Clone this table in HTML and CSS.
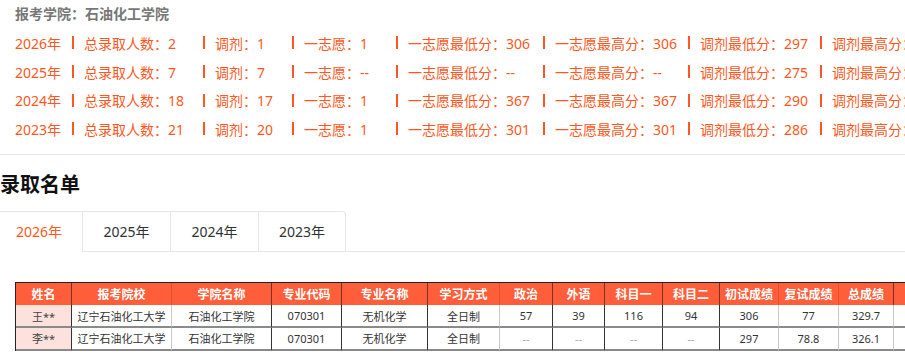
FILE: index.html
```html
<!DOCTYPE html>
<html lang="zh-CN">
<head>
<meta charset="utf-8">
<title>录取信息</title>
<link rel="stylesheet" href="styles.css">
</head>
<body>
<div class="page">
  <section class="summary">
    <div class="school">报考学院：石油化工学院</div>
    <div class="stat-row">
      <span class="s w-year">2026年</span><i class="sep"></i>
      <span class="s w-total">总录取人数：2</span><i class="sep"></i>
      <span class="s w-adj">调剂：1</span><i class="sep"></i>
      <span class="s w-first">一志愿：1</span><i class="sep"></i>
      <span class="s w-fmin">一志愿最低分：306</span><i class="sep"></i>
      <span class="s w-fmax">一志愿最高分：306</span><i class="sep"></i>
      <span class="s w-amin">调剂最低分：297</span><i class="sep"></i>
      <span class="s">调剂最高分：</span>
    </div>
    <div class="stat-row">
      <span class="s w-year">2025年</span><i class="sep"></i>
      <span class="s w-total">总录取人数：7</span><i class="sep"></i>
      <span class="s w-adj">调剂：7</span><i class="sep"></i>
      <span class="s w-first">一志愿：--</span><i class="sep"></i>
      <span class="s w-fmin">一志愿最低分：--</span><i class="sep"></i>
      <span class="s w-fmax">一志愿最高分：--</span><i class="sep"></i>
      <span class="s w-amin">调剂最低分：275</span><i class="sep"></i>
      <span class="s">调剂最高分：</span>
    </div>
    <div class="stat-row">
      <span class="s w-year">2024年</span><i class="sep"></i>
      <span class="s w-total">总录取人数：18</span><i class="sep"></i>
      <span class="s w-adj">调剂：17</span><i class="sep"></i>
      <span class="s w-first">一志愿：1</span><i class="sep"></i>
      <span class="s w-fmin">一志愿最低分：367</span><i class="sep"></i>
      <span class="s w-fmax">一志愿最高分：367</span><i class="sep"></i>
      <span class="s w-amin">调剂最低分：290</span><i class="sep"></i>
      <span class="s">调剂最高分：</span>
    </div>
    <div class="stat-row">
      <span class="s w-year">2023年</span><i class="sep"></i>
      <span class="s w-total">总录取人数：21</span><i class="sep"></i>
      <span class="s w-adj">调剂：20</span><i class="sep"></i>
      <span class="s w-first">一志愿：1</span><i class="sep"></i>
      <span class="s w-fmin">一志愿最低分：301</span><i class="sep"></i>
      <span class="s w-fmax">一志愿最高分：301</span><i class="sep"></i>
      <span class="s w-amin">调剂最低分：286</span><i class="sep"></i>
      <span class="s">调剂最高分：</span>
    </div>
  </section>

  <div class="divider"></div>

  <h2 class="title">录取名单</h2>

  <div class="tabs">
    <div class="tabs-nav">
      <div class="tab active">2026年</div>
      <div class="tab">2025年</div>
      <div class="tab">2024年</div>
      <div class="tab">2023年</div>
    </div>
  </div>

  <div class="grid">
    <div class="c h d">姓名</div>
    <div class="c h l">报考院校</div>
    <div class="c h d">学院名称</div>
    <div class="c h d">专业代码</div>
    <div class="c h d">专业名称</div>
    <div class="c h l">学习方式</div>
    <div class="c h d">政治</div>
    <div class="c h d">外语</div>
    <div class="c h d">科目一</div>
    <div class="c h d">科目二</div>
    <div class="c h l">初试成绩</div>
    <div class="c h l">复试成绩</div>
    <div class="c h d">总成绩</div>
    <div class="c h l"></div>

    <div class="c b r1 d name">王**</div>
    <div class="c b r1 l">辽宁石油化工大学</div>
    <div class="c b r1 d">石油化工学院</div>
    <div class="c b r1 d">070301</div>
    <div class="c b r1 d">无机化学</div>
    <div class="c b r1 l">全日制</div>
    <div class="c b r1 d">57</div>
    <div class="c b r1 d">39</div>
    <div class="c b r1 d">116</div>
    <div class="c b r1 d">94</div>
    <div class="c b r1 l">306</div>
    <div class="c b r1 l">77</div>
    <div class="c b r1 l">329.7</div>
    <div class="c b r1 l"></div>

    <div class="c b r2 d name">李**</div>
    <div class="c b r2 l">辽宁石油化工大学</div>
    <div class="c b r2 d">石油化工学院</div>
    <div class="c b r2 d">070301</div>
    <div class="c b r2 d">无机化学</div>
    <div class="c b r2 l">全日制</div>
    <div class="c b r2 d muted">--</div>
    <div class="c b r2 d muted">--</div>
    <div class="c b r2 d muted">--</div>
    <div class="c b r2 d muted">--</div>
    <div class="c b r2 l">297</div>
    <div class="c b r2 l">78.8</div>
    <div class="c b r2 l">326.1</div>
    <div class="c b r2 l"></div>
  </div>
</div>
</body>
</html>
```

FILE: styles.css
```css
* { box-sizing: border-box; }
html, body { margin: 0; padding: 0; background: #fff; }
body {
  font-family: "Noto Sans", "Noto Sans CJK SC", sans-serif;
  font-size: 14px;
  color: #333;
}
.page {
  width: 905px;
  height: 364px;
  overflow: hidden;
  white-space: nowrap;
}

.summary { padding-left: 15px; }
.school {
  height: 28.67px;
  line-height: 28.67px;
  font-weight: bold;
  color: #777;
}
.stat-row {
  display: flex;
  align-items: center;
  height: 28.67px;
  color: #ff5722;
}
.s { flex: none; }
.w-year { width: 57px; }
.w-total { width: 119px; }
.w-adj { width: 77px; }
.w-first { width: 92px; }
.w-fmin { width: 135px; }
.w-fmax { width: 133px; }
.w-amin { width: 120px; }
.sep {
  flex: none;
  display: block;
  width: 1.5px;
  height: 13px;
  margin-right: 10.5px;
  background: #ff5722;
}

.divider {
  margin-top: 10.67px;
  height: 1px;
  background: #e4e4e4;
}

.title {
  margin: 15px 0 11px 0;
  height: 30px;
  line-height: 30px;
  font-size: 20px;
  font-weight: bold;
  color: #111;
}

.tabs {
  display: flex;
  border-bottom: 1px solid #e4e7ed;
  margin-left: -5px;
}
.tabs-nav {
  display: flex;
  border: 1px solid #e4e7ed;
  border-bottom: none;
  border-radius: 4px 4px 0 0;
  margin-bottom: -1px;
}
.tab {
  height: 40px;
  line-height: 39px;
  padding: 0 20px;
  border-left: 1px solid #e4e7ed;
  border-bottom: 1px solid transparent;
  color: #303133;
  text-align: center;
}
.tab:first-child { border-left: none; width: 86px; }
.tab:nth-child(2) { width: 88px; }
.tab:nth-child(3) { width: 88px; }
.tab:nth-child(4) { width: 87px; }
.tab.active {
  color: #ff5722;
  border-bottom-color: #fff;
}

.grid {
  margin: 30px 0 0 15px;
  display: grid;
  grid-template-columns: 56px 100px 100px 70px 86px 72px 53px 52px 58px 57px 59px 60px 55px 60px;
  border-top: 1px solid #222;
  border-left: 1px solid #222;
  width: max-content;
  font-size: 11px;
}
.c {
  display: flex;
  align-items: center;
  justify-content: center;
  border-right: 1px solid #333;
}
.h {
  height: 22px;
  background: #ff5e3a;
  color: #fff;
  font-weight: bold;
  font-size: 12px;
}
.h.d { border-right-color: #7a3322; }
.h.l { border-right-color: #e2502f; }
.b {
  height: 23px;
  color: #333;
  background: #fff;
}
.b.d { border-right-color: #333; }
.b.l { border-right-color: #c8c8c8; }
.r1 { border-bottom: 2px solid #8a8a8a; padding-top: 1px; }
.r2 { border-bottom: 2px solid #8a8a8a; }
.name { background: #fde1dc; color: #444; }
.muted { color: #aaa; }
```
